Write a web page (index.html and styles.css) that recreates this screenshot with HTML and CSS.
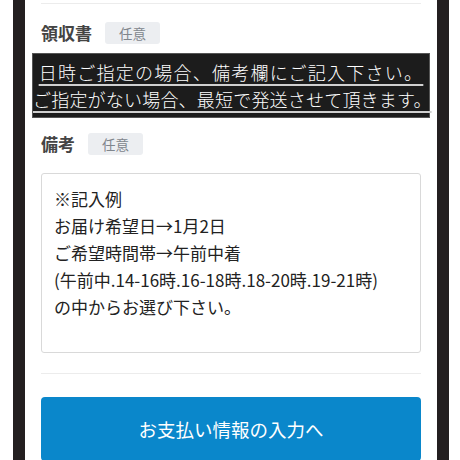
FILE: index.html
```html
<!DOCTYPE html>
<html lang="ja">
<head>
    <meta charset="UTF-8">
    <meta name="viewport" content="width=device-width, initial-scale=1.0">
    <title>ご注文手続き</title>
    <link rel="stylesheet" href="styles.css">
</head>
<body>
    <div class="phone">
        <div class="form">
            <div class="divider first"></div>

            <!-- 領収書 -->
            <div class="field-head">
                <span class="field-label">領収書</span>
                <span class="badge">任意</span>
            </div>

            <div class="notice">
                <p class="notice-line one">日時ご指定の場合、備考欄にご記入下さい。</p>
                <p class="notice-line two">ご指定がない場合、最短で発送させて頂きます。</p>
            </div>

            <!-- 備考 -->
            <div class="field-head">
                <span class="field-label">備考</span>
                <span class="badge">任意</span>
            </div>
            <textarea class="memo">※記入例
お届け希望日→1月2日
ご希望時間帯→午前中着
(午前中.14-16時.16-18時.18-20時.19-21時)
の中からお選び下さい。</textarea>

            <div class="divider"></div>

            <button class="next-btn">お支払い情報の入力へ</button>
        </div>
    </div>
</body>
</html>
```

FILE: styles.css
```css
body {
    margin: 0;
    background-color: #ffffff;
    font-family: "Noto Sans CJK JP", "Noto Sans", sans-serif;
    overflow: hidden;
}
.phone {
    margin: 0 11px 0 13px;
    border-left: 12px solid #231f20;
    border-right: 12px solid #231f20;
    background-color: #fff;
    min-height: 100vh;
}
.form {
    padding: 0 16px;
    display: flex;
    flex-direction: column;
}
.divider {
    height: 1px;
    background-color: #ececec;
    margin: 20px 0 23px;
}
.divider.first {
    margin: 3px 0 18px;
}
.field-head {
    display: flex;
    align-items: center;
    gap: 13px;
    height: 22px;
}
.field-label {
    font-size: 17px;
    font-weight: bold;
    color: #444;
    line-height: 22px;
}
.badge {
    background-color: #eceef1;
    color: #80858c;
    font-size: 13.5px;
    line-height: 22px;
    padding: 0 14px;
    border-radius: 3px;
}

/* 黒帯のお知らせ */
.notice {
    background-color: #1c1c1c;
    border: 1px solid #555;
    margin: 9px -9px 15px -9px;
    padding: 5px 0 4px;
    text-align: center;
    color: #fff;
}
.notice-line {
    margin: 0;
    font-size: 18px;
    font-weight: 300;
    line-height: 27px;
    text-decoration: underline;
    text-decoration-color: #d0d0d0;
    text-decoration-thickness: 1.5px;
    text-underline-offset: 4px;
    white-space: nowrap;
}
.notice-line.one {
    letter-spacing: 1.25px;
}
.notice-line.two {
    letter-spacing: 0.2px;
}

.memo {
    margin-top: 18px;
    height: 180px;
    box-sizing: border-box;
    border: 1px solid #d9d9d9;
    border-radius: 3px;
    padding: 11px 12px;
    font-family: "Noto Sans CJK JP", "Noto Sans", sans-serif;
    font-size: 17px;
    line-height: 27px;
    color: #222;
    resize: none;
    outline: none;
    overflow: hidden;
}

.next-btn {
    height: 64px;
    border: none;
    border-radius: 4px;
    background-color: #0a87cb;
    color: #fff;
    font-family: "Noto Sans CJK JP", "Noto Sans", sans-serif;
    font-size: 18.5px;
    cursor: pointer;
}
```
